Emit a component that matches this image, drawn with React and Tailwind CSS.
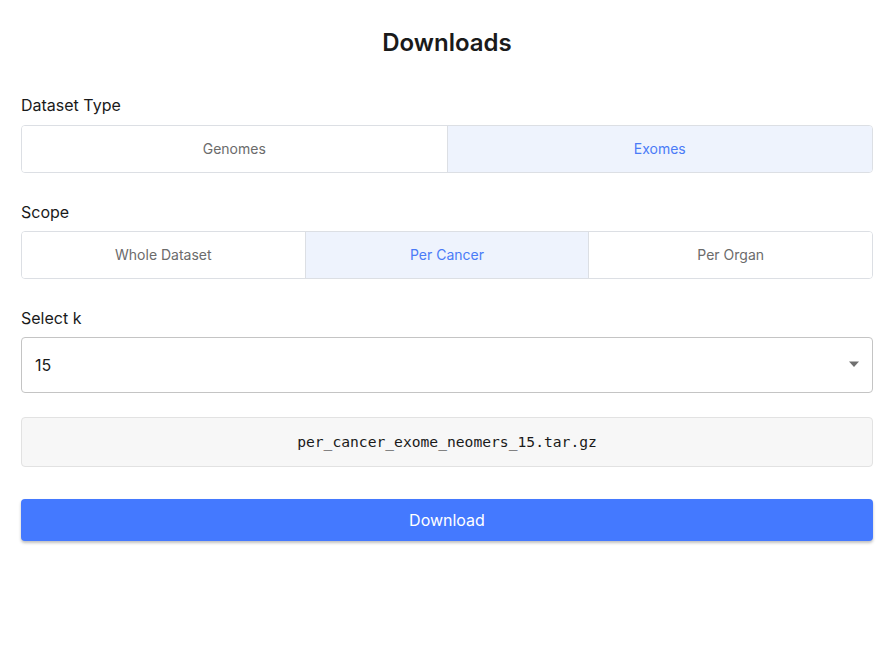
import React, { useState } from 'react'

const Toggle = ({ options, value, onChange }) => (
  <div className='flex border border-[#dcdfe4] rounded-[4px] overflow-hidden h-[48px]'>
    {options.map((opt, idx) => (
      <button
        key={opt}
        onClick={() => onChange(opt)}
        className={`flex-1 text-[14px] pb-[2px] ${idx > 0 ? 'border-l border-[#dcdfe4]' : ''} ${
          value === opt ? 'bg-[#eef3fd] text-[#4a7bf7]' : 'bg-white text-[#6b6b6b]'
        }`}
      >
        {opt}
      </button>
    ))}
  </div>
)

const App = () => {
  const [type, setType] = useState('Exomes')
  const [scope, setScope] = useState('Per Cancer')
  const [k, setK] = useState('15')

  const fileName = `${scope === 'Whole Dataset' ? 'whole' : scope === 'Per Cancer' ? 'per_cancer' : 'per_organ'}_${
    type === 'Exomes' ? 'exome' : 'genome'
  }_neomers_${k}.tar.gz`

  return (
    <div className="bg-white min-h-[645px] px-[21px] pt-[27px] font-['Inter',sans-serif] text-[#1a1a1a]">
      <h1 className='text-center text-[24px] leading-[32px] font-semibold'>Downloads</h1>

      <div className='mt-[34px] text-[16px] leading-[24px]'>Dataset Type</div>
      <div className='mt-[8px]'>
        <Toggle options={['Genomes', 'Exomes']} value={type} onChange={setType} />
      </div>

      <div className='mt-[27px] text-[16px] leading-[24px]'>Scope</div>
      <div className='mt-[7px]'>
        <Toggle options={['Whole Dataset', 'Per Cancer', 'Per Organ']} value={scope} onChange={setScope} />
      </div>

      <div className='mt-[27px] text-[16px] leading-[24px]'>Select k</div>
      <div className='mt-[7px] relative'>
        <select
          value={k}
          onChange={(e) => setK(e.target.value)}
          className='appearance-none w-full h-[56px] border border-[#c4c4c4] rounded-[4px] px-[13px] pb-[1px] text-[16px] bg-white outline-none'
        >
          {['12', '13', '14', '15', '16', '17', '18', '19', '20'].map((v) => (
            <option key={v} value={v}>{v}</option>
          ))}
        </select>
        <svg className='absolute right-[13px] top-[24px] pointer-events-none' width='12' height='7' viewBox='0 0 12 7'>
          <path d='M1 0.5 L11 0.5 L6 6 Z' fill='#707070' />
        </svg>
      </div>

      <div className="mt-[24px] h-[50px] bg-[#f7f7f7] border border-[#e2e2e2] rounded-[4px] flex items-center justify-center font-['DejaVu_Sans_Mono',monospace] text-[14.65px] text-[#1a1a1a]">
        {fileName}
      </div>

      <button className='mt-[32px] w-full h-[42px] bg-[#4479ff] text-white text-[16px] rounded-[4px] shadow-[0_2px_3px_rgba(0,0,0,0.25)]'>
        Download
      </button>
    </div>
  )
}

export default App
